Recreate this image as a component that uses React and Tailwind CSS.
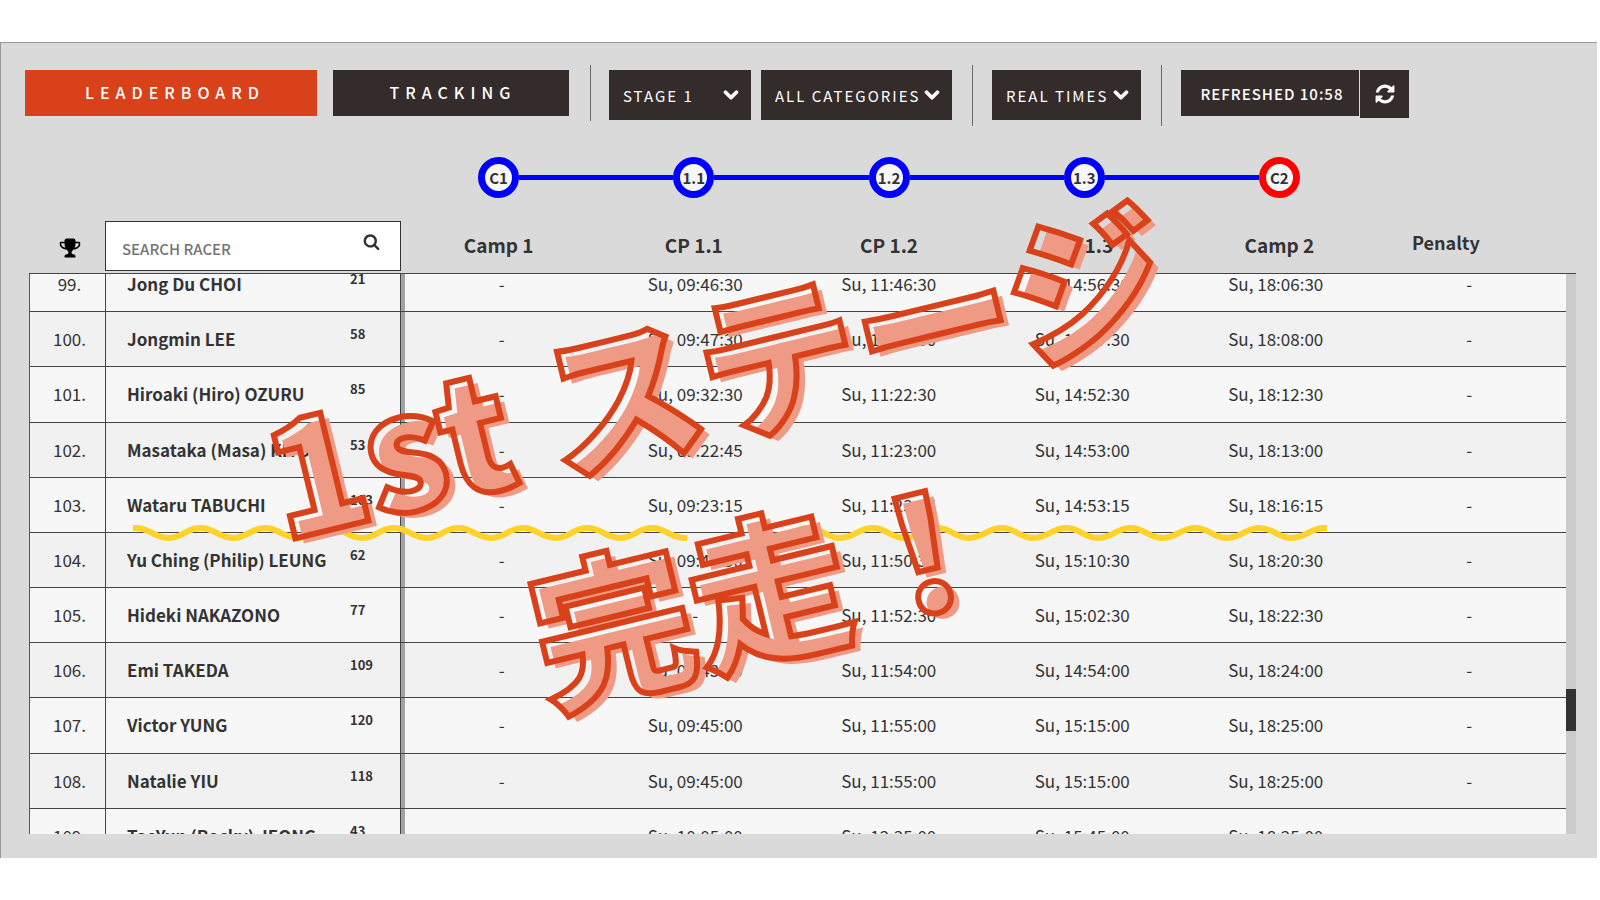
import { useState } from 'react';
import { FaChevronDown } from 'react-icons/fa';

const CHECKPOINTS = [
  { code: 'C1', label: 'Camp 1' },
  { code: '1.1', label: 'CP 1.1' },
  { code: '1.2', label: 'CP 1.2' },
  { code: '1.3', label: 'CP 1.3' },
  { code: 'C2', label: 'Camp 2' },
];

const RACERS = [
  { rank: 99, name: 'Jong Du CHOI', bib: 21, times: ['-', 'Su, 09:46:30', 'Su, 11:46:30', 'Su, 14:56:30', 'Su, 18:06:30', '-'] },
  { rank: 100, name: 'Jongmin LEE', bib: 58, times: ['-', 'Su, 09:47:30', 'Su, 11:47:30', 'Su, 14:57:30', 'Su, 18:08:00', '-'] },
  { rank: 101, name: 'Hiroaki (Hiro) OZURU', bib: 85, times: ['-', 'Su, 09:32:30', 'Su, 11:22:30', 'Su, 14:52:30', 'Su, 18:12:30', '-'] },
  { rank: 102, name: 'Masataka (Masa) KITORI', bib: 53, times: ['-', 'Su, 09:22:45', 'Su, 11:23:00', 'Su, 14:53:00', 'Su, 18:13:00', '-'] },
  { rank: 103, name: 'Wataru TABUCHI', bib: 103, times: ['-', 'Su, 09:23:15', 'Su, 11:23:15', 'Su, 14:53:15', 'Su, 18:16:15', '-'] },
  { rank: 104, name: 'Yu Ching (Philip) LEUNG', bib: 62, times: ['-', 'Su, 09:40:30', 'Su, 11:50:30', 'Su, 15:10:30', 'Su, 18:20:30', '-'] },
  { rank: 105, name: 'Hideki NAKAZONO', bib: 77, times: ['-', '-', 'Su, 11:52:30', 'Su, 15:02:30', 'Su, 18:22:30', '-'] },
  { rank: 106, name: 'Emi TAKEDA', bib: 109, times: ['-', 'Su, 09:43:00', 'Su, 11:54:00', 'Su, 14:54:00', 'Su, 18:24:00', '-'] },
  { rank: 107, name: 'Victor YUNG', bib: 120, times: ['-', 'Su, 09:45:00', 'Su, 11:55:00', 'Su, 15:15:00', 'Su, 18:25:00', '-'] },
  { rank: 108, name: 'Natalie YIU', bib: 118, times: ['-', 'Su, 09:45:00', 'Su, 11:55:00', 'Su, 15:15:00', 'Su, 18:25:00', '-'] },
  { rank: 109, name: 'TaeYun (Rocky) JEONG', bib: 43, times: ['-', 'Su, 10:05:00', 'Su, 12:35:00', 'Su, 15:45:00', 'Su, 18:25:00', '-'] },
];

const ICONS = {
  trophy: 'M522 883q-74-162-74-371h-256v96q0 78 94.5 162t235.5 113zm1078-275v-96h-256q0 209-74 371 141-29 235.5-113t94.5-162zm128-128v128q0 71-41.5 143t-112 130-173 97.5-215.5 44.5q-42 54-95 95-38 34-52.5 72.5t-14.5 89.5q0 54 30.5 91t97.5 37q75 0 133.5 45.5t58.5 114.5v64q0 14-9 23t-23 9h-832q-14 0-23-9t-9-23v-64q0-69 58.5-114.5t133.5-45.5q67 0 97.5-37t30.5-91q0-51-14.5-89.5t-52.5-72.5q-53-41-95-95-113-5-215.5-44.5t-173-97.5-112-130-41.5-143v-128q0-40 28-68t68-28h288v-96q0-66 47-113t113-47h576q66 0 113 47t47 113v96h288q40 0 68 28t28 68z',
  search: 'M1216 832q0-185-131.5-316.5t-316.5-131.5-316.5 131.5-131.5 316.5 131.5 316.5 316.5 131.5 316.5-131.5 131.5-316.5zm512 832q0 52-38 90t-90 38q-54 0-90-38l-343-342q-179 124-399 124-143 0-273.5-55.5t-225-150-150-225-55.5-273.5 55.5-273.5 150-225 225-150 273.5-55.5 273.5 55.5 225 150 150 225 55.5 273.5q0 220-124 399l343 343q37 37 37 90z',
  refresh: 'M1639 1056q0 5-1 7-64 268-268 434.5t-478 166.5q-146 0-282.5-55t-243.5-157l-129 129q-19 19-45 19t-45-19-19-45v-448q0-26 19-45t45-19h448q26 0 45 19t19 45-19 45l-137 137q71 66 161 102t187 36q134 0 250-65t186-179q11-17 53-117 8-23 30-23h192q13 0 22.5 9.5t9.5 22.5zm25-800v448q0 26-19 45t-45 19h-448q-26 0-45-19t-19-45 19-45l138-138q-148-137-349-137-134 0-250 65t-186 179q-11 17-53 117-8 23-30 23h-199q-13 0-22.5-9.5t-9.5-22.5v-7q65-268 270-434.5t480-166.5q146 0 284 55.5t245 156.5l130-129q19-19 45-19t45 19 19 45z',
};

const Icon = ({ name, className }) => (
  <svg viewBox="0 0 1792 1792" fill="currentColor" className={className} aria-hidden="true">
    <path d={ICONS[name]} />
  </svg>
);

const Divider = ({ className }) => <div className={`w-px bg-[#6b6867] ${className}`} />;

function Dropdown({ label, options, className }) {
  return (
    <div className={`relative h-[50px] bg-[#332c2a] text-white ${className}`}>
      <select aria-label={label} className="w-full h-full appearance-none pl-3.5 pt-px text-[15px] tracking-[2px] outline-none">
        {options.map((o) => <option key={o}>{o}</option>)}
      </select>
      <FaChevronDown stroke="currentColor" strokeWidth="40" className="absolute right-3 top-[17px] w-4 h-4 pointer-events-none" />
    </div>
  );
}

function Toolbar() {
  return (
    <div className="flex items-start pl-6 pt-[22px] text-base leading-6">
      <button className="mt-[5px] w-[292px] h-[46px] pl-2 pb-0.5 bg-[#d9411a] text-white font-medium tracking-[6px]">LEADERBOARD</button>
      <button className="mt-[5px] ml-4 w-[236px] h-[46px] pl-1 pb-0.5 bg-[#332c2a] text-white font-medium tracking-[6px]">TRACKING</button>
      <Divider className="h-14 ml-[21px] mr-[18px]" />
      <div className="flex gap-2.5 mt-[5px]">
        <Dropdown label="Stage" options={['STAGE 1']} className="w-[142px]" />
        <Dropdown label="Category" options={['ALL CATEGORIES']} className="w-[191px]" />
      </div>
      <Divider className="h-[61px] ml-5 mr-[19px]" />
      <Dropdown label="Time type" options={['REAL TIMES']} className="mt-[5px] w-[149px]" />
      <Divider className="h-[61px] ml-5 mr-[19px]" />
      <div className="flex gap-px mt-[5px] text-white">
        <div className="w-[178px] h-[46px] pl-1 pt-0.5 bg-[#332c2a] flex items-center justify-center text-[15px] font-medium tracking-[1px]">REFRESHED 10:58</div>
        <button aria-label="Refresh" className="w-[49px] h-12 bg-[#332c2a] flex items-center justify-center">
          <Icon name="refresh" className="w-[22px] h-[22px]" />
        </button>
      </div>
    </div>
  );
}

function CourseHeader() {
  const [query, setQuery] = useState('');
  const last = CHECKPOINTS.length - 1;
  return (
    <div className="flex items-end mt-[31px] pl-[29px] h-[114px] text-[#333]">
      <div className="w-[75px] h-[34px] flex justify-center">
        <Icon name="trophy" className="w-[22px] h-[22px] ml-1 text-black" />
      </div>
      <label className="w-[296px] h-[50px] flex bg-white border border-[#333]">
        <input value={query} onChange={(e) => setQuery(e.target.value)} placeholder="SEARCH RACER" aria-label="Search racer"
          className="flex-1 min-w-0 pl-4 pt-1.5 text-[15px] font-medium outline-none placeholder:text-[#757575]" />
        <Icon name="search" className="w-[17px] h-[17px] mt-[11px] mr-5" />
      </label>
      <div className="flex-1 grid grid-cols-5 self-start">
        {CHECKPOINTS.map(({ code, label }, i) => (
          <div key={code} className="text-center font-bold">
            <div className="flex items-center">
              <div className={`flex-1 h-[5px] ${i > 0 ? 'bg-[#0000fe]' : ''}`} />
              <div className={`w-[41px] h-[41px] rounded-full border-[7px] bg-[#f7f7f7] flex items-center justify-center pt-px text-[15px] ${i === last ? 'border-[#fe0000]' : 'border-[#0000fe]'}`}>
                {code}
              </div>
              <div className={`flex-1 h-[5px] ${i < last ? 'bg-[#0000fe]' : ''}`} />
            </div>
            <div className="mt-[33px] text-[19px] leading-7">{label}</div>
          </div>
        ))}
      </div>
      <div className="w-[220px] h-[43px] pl-[35px] text-[18px] leading-7 font-bold">Penalty</div>
    </div>
  );
}

function Results() {
  return (
    <div className="ml-[28px] mr-[21px] mt-0.5 h-[561px] flex border-t border-[#444] overflow-hidden text-[#333]">
      <div className="flex-1 overflow-hidden border-l border-[#555]">
        <table className="w-full h-[607px] -mt-[17px] table-fixed border-separate border-spacing-0 text-[17px] leading-6">
          <colgroup>
            <col className="w-[76px]" />
            <col className="w-[244px]" />
            <col className="w-[51px]" />
            <col className="w-1" />
            <col span={6} />
          </colgroup>
          <tbody>
            {RACERS.map(({ rank, name, bib, times }) => (
              <tr key={rank} className="odd:bg-[#f7f7f7] even:bg-[#f1f1f1]">
                <td className="border-b border-r border-[#444] pl-1 text-center">{rank}.</td>
                <td className="border-b border-[#444] py-0 pl-[21px] pr-0 font-bold whitespace-nowrap">{name}</td>
                <td className="border-b border-r border-[#444] p-0 pb-2.5 text-[13px] leading-4 font-bold">{bib}</td>
                <td className="border-b border-[#444] p-0 bg-[#a3a3a3]" />
                {times.map((t, i) => (
                  <td key={i} className="border-b border-[#444] p-0 text-center">{t}</td>
                ))}
              </tr>
            ))}
          </tbody>
        </table>
      </div>
      <div className="w-2.5 bg-[#cbcbcb]">
        <div className="mt-[415px] h-[42px] bg-[#333]" />
      </div>
    </div>
  );
}

// each half period is 32px wide and swings between y 5 and y 15
const wave = (n) => 'M4 5' + Array.from({ length: n }, (_, i) => {
  const x = 4 + i * 32.25;
  const [from, to] = i % 2 ? [15, 5] : [5, 15];
  return ` C${x + 14} ${from} ${x + 18} ${to} ${x + 32.25} ${to}`;
}).join('');

const Wave = ({ className }) => (
  <svg width="556" height="20" viewBox="0 0 556 20" fill="none" stroke="#fdd32a" strokeWidth="6" className={`absolute ${className}`} aria-hidden="true">
    <path d={wave(17)} strokeLinecap="square" />
  </svg>
);

function StampLine({ text }) {
  return (
    <div>
      <span data-text={text} className="relative inline-block text-transparent [-webkit-text-stroke:6px_#d9411a] before:content-[attr(data-text)] before:absolute before:left-[7px] before:top-[7px] before:-z-10 before:text-[#ee9a84] before:[-webkit-text-stroke:0px]">
        {text}
      </span>
    </div>
  );
}

export default function App() {
  return (
    <div className="bg-white py-[42px] font-['Noto_Sans_CJK_JP','Noto_Sans',sans-serif]">
      <main className="relative mr-[3px] pb-6 bg-[#dadada] border-t border-l border-[#999]">
        <Toolbar />
        <CourseHeader />
        <Results />

        <Wave className="left-[131px] top-[480px]" />
        <Wave className="left-[771px] top-[480px] -scale-x-100" />
        <div className="absolute isolate left-[259px] top-[208px] w-[960px] -rotate-[13.6deg] text-center text-[160px] leading-[222px] font-black whitespace-nowrap">
          <StampLine text="1st ステージ" />
          <StampLine text="完走！" />
        </div>
      </main>
    </div>
  );
}
